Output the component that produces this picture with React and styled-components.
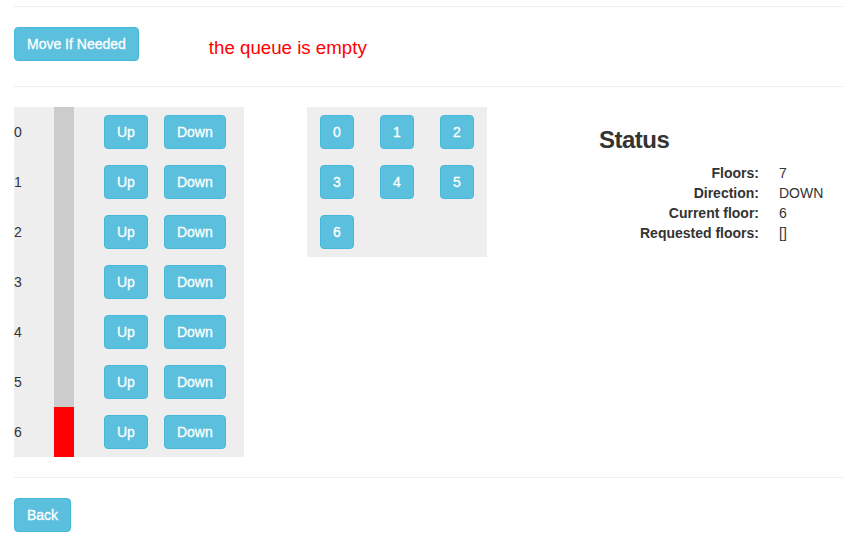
import React from "react";
import styled, { createGlobalStyle } from "styled-components";

const Global = createGlobalStyle`
  html, body { margin: 0; padding: 0; background: #fff; }
  body {
    font-family: "Liberation Sans", Arial, Helvetica, sans-serif;
    font-size: 14px;
    line-height: 20px;
    color: #333;
  }
  * { box-sizing: border-box; }
`;

const Page = styled.div`
  padding: 6px 0 0 14px;
`;

const Rule = styled.div`
  height: 1px;
  background: #eee;
`;

const TopBar = styled.div`
  display: flex;
  align-items: flex-start;
  padding: 20px 0 25px;
`;

const Button = styled.button`
  display: inline-flex;
  align-items: center;
  justify-content: center;
  height: 34px;
  min-width: ${(p) => (p.$square ? "34px" : "0")};
  padding: ${(p) => (p.$square ? "0" : "6px 12px")};
  font-family: inherit;
  font-size: 14px;
  line-height: 20px;
  font-weight: 400;
  color: #fff;
  -webkit-text-stroke: 0.3px #fff;
  background: #5bc0de;
  border: 1px solid #46b8da;
  border-radius: 4px;
  cursor: pointer;
  white-space: nowrap;
`;

const Message = styled.span`
  margin: 11px 0 0 70px;
  font-size: 18.7px;
  line-height: 20px;
  color: #f00;
`;

const Main = styled.div`
  display: grid;
  grid-template-columns: 293px 292px 1fr;
  align-items: start;
  padding: 20px 0;
`;

const Shaft = styled.div`
  width: 230px;
  background: #eee;
`;

const FloorRow = styled.div`
  display: grid;
  grid-template-columns: 40px 20px 1fr;
  height: 50px;
`;

const FloorLabel = styled.div`
  display: flex;
  align-items: center;
`;

const Car = styled.div`
  background: ${(p) => (p.$here ? "#f00" : "#ccc")};
`;

const CallButtons = styled.div`
  display: flex;
  align-items: center;
  gap: 16px;
  padding-left: 30px;
`;

const Keypad = styled.div`
  width: 180px;
  padding: 8px 13px;
  background: #eee;
  display: grid;
  grid-template-columns: repeat(3, 34px);
  column-gap: 26px;
  row-gap: 16px;
`;

const Status = styled.div`
  font-size: 14px;
`;

const Heading = styled.h3`
  margin: 20px 0 10px;
  font-size: 24px;
  line-height: 26.4px;
  font-weight: 700;
  letter-spacing: -0.5px;
  color: #333;
`;

const DL = styled.dl`
  margin: 0;
  display: grid;
  grid-template-columns: 160px 1fr;
  column-gap: 20px;
  line-height: 20px;
`;

const DT = styled.dt`
  text-align: right;
  font-weight: 700;
`;

const DD = styled.dd`
  margin: 0;
`;

const Footer = styled.div`
  padding-top: 20px;
`;

const floors = [0, 1, 2, 3, 4, 5, 6];
const current = 6;

export default function App() {
  return (
    <Page>
      <Global />
      <Rule />
      <TopBar>
        <Button>Move If Needed</Button>
        <Message>the queue is empty</Message>
      </TopBar>
      <Rule />
      <Main>
        <Shaft>
          {floors.map((f) => (
            <FloorRow key={f}>
              <FloorLabel>{f}</FloorLabel>
              <Car $here={f === current} />
              <CallButtons>
                <Button>Up</Button>
                <Button>Down</Button>
              </CallButtons>
            </FloorRow>
          ))}
        </Shaft>
        <div>
          <Keypad>
            {floors.map((f) => (
              <Button key={f} $square>
                {f}
              </Button>
            ))}
          </Keypad>
        </div>
        <Status>
          <Heading>Status</Heading>
          <DL>
            <DT>Floors:</DT>
            <DD>7</DD>
            <DT>Direction:</DT>
            <DD>DOWN</DD>
            <DT>Current floor:</DT>
            <DD>6</DD>
            <DT>Requested floors:</DT>
            <DD>[]</DD>
          </DL>
        </Status>
      </Main>
      <Rule />
      <Footer>
        <Button>Back</Button>
      </Footer>
    </Page>
  );
}
